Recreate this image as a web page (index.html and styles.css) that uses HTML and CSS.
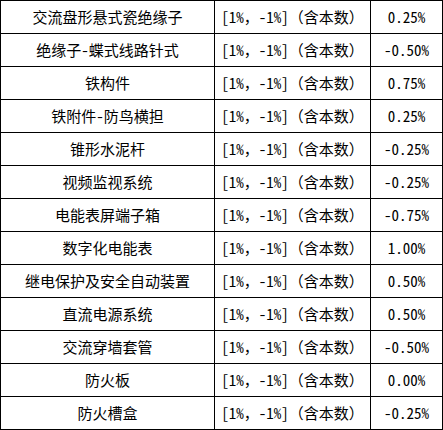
FILE: index.html
```html
<!DOCTYPE html>
<html lang="zh-CN">
<head>
<meta charset="utf-8">
<title>调整系数</title>
<link rel="stylesheet" href="styles.css">
</head>
<body>
<table class="grid">
  <colgroup>
    <col class="c-name">
    <col class="c-range">
    <col class="c-rate">
  </colgroup>
  <tbody>
    <tr><td>交流盘形悬式瓷绝缘子</td><td><span class="hw">[1%</span>，<span class="hw">-1%]</span>（含本数）</td><td class="rate">0.25%</td></tr>
    <tr><td>绝缘子<span class="hw">-</span>蝶式线路针式</td><td><span class="hw">[1%</span>，<span class="hw">-1%]</span>（含本数）</td><td class="rate">-0.50%</td></tr>
    <tr><td>铁构件</td><td><span class="hw">[1%</span>，<span class="hw">-1%]</span>（含本数）</td><td class="rate">0.75%</td></tr>
    <tr><td>铁附件<span class="hw">-</span>防鸟横担</td><td><span class="hw">[1%</span>，<span class="hw">-1%]</span>（含本数）</td><td class="rate">0.25%</td></tr>
    <tr><td>锥形水泥杆</td><td><span class="hw">[1%</span>，<span class="hw">-1%]</span>（含本数）</td><td class="rate">-0.25%</td></tr>
    <tr><td>视频监视系统</td><td><span class="hw">[1%</span>，<span class="hw">-1%]</span>（含本数）</td><td class="rate">-0.25%</td></tr>
    <tr><td>电能表屏端子箱</td><td><span class="hw">[1%</span>，<span class="hw">-1%]</span>（含本数）</td><td class="rate">-0.75%</td></tr>
    <tr><td>数字化电能表</td><td><span class="hw">[1%</span>，<span class="hw">-1%]</span>（含本数）</td><td class="rate">1.00%</td></tr>
    <tr><td>继电保护及安全自动装置</td><td><span class="hw">[1%</span>，<span class="hw">-1%]</span>（含本数）</td><td class="rate">0.50%</td></tr>
    <tr><td>直流电源系统</td><td><span class="hw">[1%</span>，<span class="hw">-1%]</span>（含本数）</td><td class="rate">0.50%</td></tr>
    <tr><td>交流穿墙套管</td><td><span class="hw">[1%</span>，<span class="hw">-1%]</span>（含本数）</td><td class="rate">-0.50%</td></tr>
    <tr><td>防火板</td><td><span class="hw">[1%</span>，<span class="hw">-1%]</span>（含本数）</td><td class="rate">0.00%</td></tr>
    <tr><td>防火槽盒</td><td><span class="hw">[1%</span>，<span class="hw">-1%]</span>（含本数）</td><td class="rate">-0.25%</td></tr>
  </tbody>
</table>
</body>
</html>
```
FILE: styles.css
```css
html, body {
  margin: 0;
  padding: 0;
  background: #ffffff;
}

.grid {
  border-collapse: separate;
  border-spacing: 0;
  table-layout: fixed;
  width: 443px;
  border-left: 1px solid #000;
  border-top: 1px solid #000;
  font-family: "Noto Sans CJK SC", "Noto Sans", sans-serif;
  font-size: 15px;
  color: #000;
}

.c-name { width: 214px; }
.c-range { width: 156px; }
.c-rate { width: 72px; }

.grid td {
  box-sizing: border-box;
  height: 33px;
  padding: 0;
  border-right: 1px solid #000;
  border-bottom: 1px solid #000;
  text-align: center;
  vertical-align: middle;
  line-height: 32px;
  white-space: nowrap;
  overflow: hidden;
}

.hw,
.grid td.rate {
  font-feature-settings: "hwid" 1;
}
```
